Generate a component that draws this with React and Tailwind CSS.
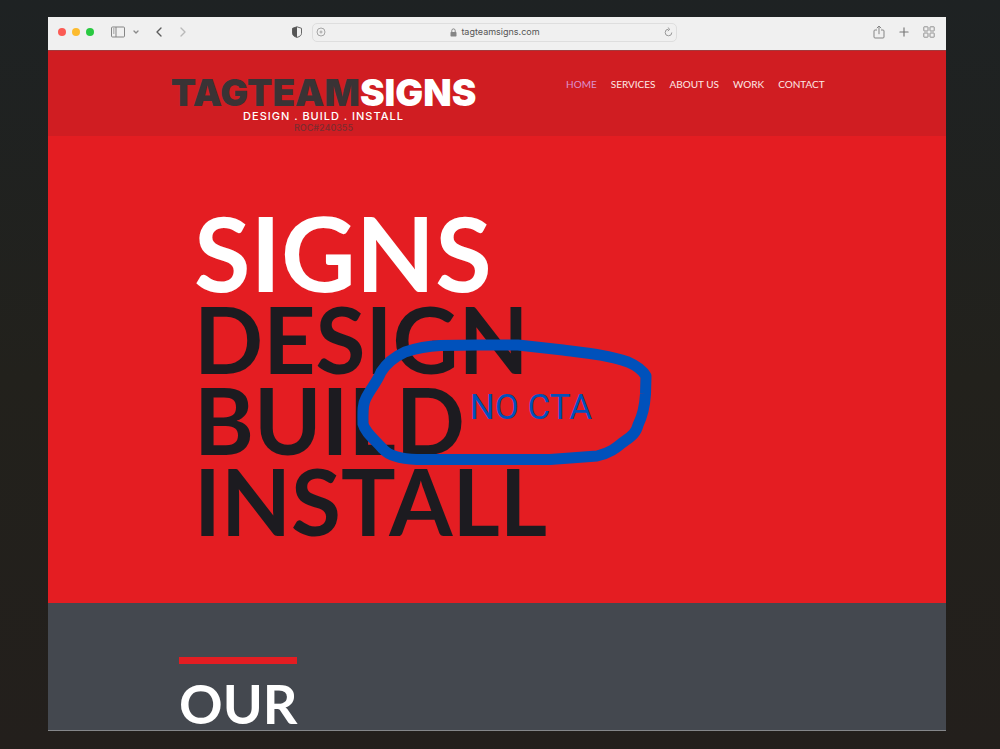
import React from 'react';
import { ChevronDown, ChevronLeft, ChevronRight, Plus } from 'lucide-react';

const navLinks = ['HOME', 'SERVICES', 'ABOUT US', 'WORK', 'CONTACT'];

const SidebarIcon = () => (
  <svg width="14" height="12" viewBox="0 0 14 12" fill="none" stroke="#858585">
    <rect x="0.5" y="1" width="13" height="10" rx="1" />
    <path d="M5 1v10" />
    <path d="M2 3h1.5M2 5h1.5M2 7h1.5" />
  </svg>
);

const ShieldIcon = () => (
  <svg width="12" height="12" viewBox="0 0 12 12">
    <path d="M6 .8 10.5 2.3v5C10.5 9.3 9 10.5 6 11.4 3 10.5 1.5 9.3 1.5 7.3v-5z" fill="none" stroke="#666" />
    <path d="M6 .8 1.5 2.3v5C1.5 9.3 3 10.5 6 11.4z" fill="#555" />
  </svg>
);

const SiteIcon = () => (
  <svg width="10" height="10" viewBox="0 0 10 10" fill="none" stroke="#a5a5a5">
    <circle cx="5" cy="5" r="4" />
    <path d="M3.5 5h3M5 3.5v3" />
  </svg>
);

const LockIcon = () => (
  <svg width="7" height="9" viewBox="0 0 7 9">
    <rect x="0.5" y="4" width="6" height="4.5" rx="0.7" fill="#858585" />
    <path d="M1.8 4V2.6a1.7 1.7 0 0 1 3.4 0V4" fill="none" stroke="#858585" />
  </svg>
);

const ReloadIcon = () => (
  <svg width="9" height="10" viewBox="0 0 9 10" fill="none" stroke="#999">
    <path d="M4.5 2.2A3.3 3.3 0 1 0 7.8 5.5M3.8.5l2 1.8-2 1.8" />
  </svg>
);

const ShareIcon = () => (
  <svg width="12" height="14" viewBox="0 0 12 14" fill="none" stroke="#858585">
    <path d="M4 5H2a1 1 0 0 0-1 1v6a1 1 0 0 0 1 1h8a1 1 0 0 0 1-1V6a1 1 0 0 0-1-1H8" />
    <path d="M6 9.2V1M3.8 3.2 6 1l2.2 2.2" />
  </svg>
);

const TabsIcon = () => (
  <svg width="12" height="12" viewBox="0 0 12 12" fill="none" stroke="#919191">
    <rect x="0.8" y="0.8" width="4.2" height="4.2" rx="0.4" />
    <rect x="7" y="0.8" width="4.2" height="4.2" rx="0.4" />
    <rect x="0.8" y="7" width="4.2" height="4.2" rx="0.4" />
    <rect x="7" y="7" width="4.2" height="4.2" rx="0.4" />
  </svg>
);

const BrowserBar = () => (
  <div className="flex h-[33px] items-center bg-[#f0f0f0] pr-[11px] pb-[3px] pl-[10px]">
    <div className="flex gap-[6px]">
      <span className="h-2 w-2 rounded-full bg-[#fb5b54]"></span>
      <span className="h-2 w-2 rounded-full bg-[#fcbb2f]"></span>
      <span className="h-2 w-2 rounded-full bg-[#29c941]"></span>
    </div>
    <div className="ml-[17px] flex items-center">
      <button aria-label="Sidebar"><SidebarIcon /></button>
      <button aria-label="Tab groups" className="ml-[7px]"><ChevronDown size={8} strokeWidth={4} color="#8a8a8a" /></button>
      <button aria-label="Back" className="ml-[11px]"><ChevronLeft size={16} color="#5c5c5c" /></button>
      <button aria-label="Forward" className="ml-2"><ChevronRight size={16} color="#b9b9b9" /></button>
    </div>
    <div className="flex flex-1 items-center justify-center">
      <button aria-label="Privacy report" className="mr-[9px]"><ShieldIcon /></button>
      <div className="flex h-[19px] w-2/3 max-w-[365px] items-center rounded-[5px] border border-[#dedede] px-[3px]">
        <SiteIcon />
        <div className="flex flex-1 items-center justify-center gap-1">
          <LockIcon />
          <span className="font-['Inter',sans-serif] text-[9px] leading-3 text-[#555]">tagteamsigns.com</span>
        </div>
        <button aria-label="Reload"><ReloadIcon /></button>
      </div>
    </div>
    <div className="ml-24 flex items-center gap-3">
      <button aria-label="Share"><ShareIcon /></button>
      <button aria-label="New tab"><Plus size={14} color="#777" /></button>
      <button aria-label="Show tabs"><TabsIcon /></button>
    </div>
  </div>
);

const Header = () => (
  <header className="flex h-[85px] items-start bg-[#d01d22] pl-[122px]">
    <a href="#home" className="flex w-[307px] flex-col items-center pt-6">
      <span className="font-['Inter',sans-serif] text-[37px] leading-9 font-black whitespace-nowrap text-white">
        <span className="text-[#3a3335]">TAGTEAM</span>SIGNS
      </span>
      <span className="font-['Inter',sans-serif] text-[11px] leading-[10px] font-medium tracking-[1px] whitespace-nowrap text-white">DESIGN . BUILD . INSTALL</span>
      <span className="font-['Inter',sans-serif] text-[9px] leading-[14px] font-medium text-[#7c2c30]">ROC#240355</span>
    </a>
    <nav className="ml-[89px] flex gap-[14px] pt-[25px]">
      {navLinks.map((link) => (
        <a
          key={link}
          href="#"
          className={link === 'HOME' ? 'text-[10px] leading-4 whitespace-nowrap text-[#dc92cf]' : 'text-[10px] leading-4 whitespace-nowrap text-[#fde9e6]'}
        >
          {link}
        </a>
      ))}
    </nav>
  </header>
);

// hand drawn marker loop with its note, sits over the hero headline
const Markup = () => (
  <div className="absolute top-[202px] left-[308px] flex h-[128px] w-[298px] items-center justify-center">
    <svg className="absolute inset-0" width="298" height="128" viewBox="356 338 298 128" fill="none">
      <path
        d="M518 345L477 345L440 345.500C428 346 417 348 405 352C392 358 386 364 381 372C377 382 371 388 366 398C362 405 363 415 363 424C365 432 374 439 383 449C389 456 402 459 417 459.500L550 459.500L597 456C610 453 616 448 622 443C630 437 636 434 638 425C643 415 645 402 645.500 394L646 376C642 369 635 365 628 362C608 355 587 353 563 350Z"
        stroke="#0051bb"
        strokeWidth="11"
        strokeLinejoin="round"
      />
    </svg>
    <span className="relative pt-3 pl-13 font-['Roboto',sans-serif] text-[35px] leading-10 whitespace-nowrap text-[#0051bb]">NO CTA</span>
  </div>
);

const Hero = () => (
  <section className="relative bg-[#e41d22] pt-[71px] pb-[62px] pl-[146px]">
    <h1 className="font-bold">
      <span className="block text-[103px] leading-[91px] text-white">SIGNS</span>
      <span className="block text-[91px] leading-[81px] text-[#1c1b20]">
        DESIGN<br />BUILD<br />INSTALL
      </span>
    </h1>
    <Markup />
  </section>
);

export default function App() {
  return (
    <div className="min-h-screen bg-linear-to-b from-[#1e2223] via-[#22211c] to-[#231f1c] pt-[17px] pr-[54px] pb-[18px] pl-12 font-['Lato',sans-serif]">
      <div className="border-b border-[#85878a] bg-[#44484f]">
        <BrowserBar />
        <div className="border-t border-[#a33a3d]">
          <Header />
          <Hero />
          <section className="pt-[54px] pl-[131px]">
            <div className="h-[7px] w-[118px] bg-[#e41d22]"></div>
            <h2 className="pt-[14px] text-[54px] leading-[52px] font-bold text-white">OUR</h2>
          </section>
        </div>
      </div>
    </div>
  );
}
